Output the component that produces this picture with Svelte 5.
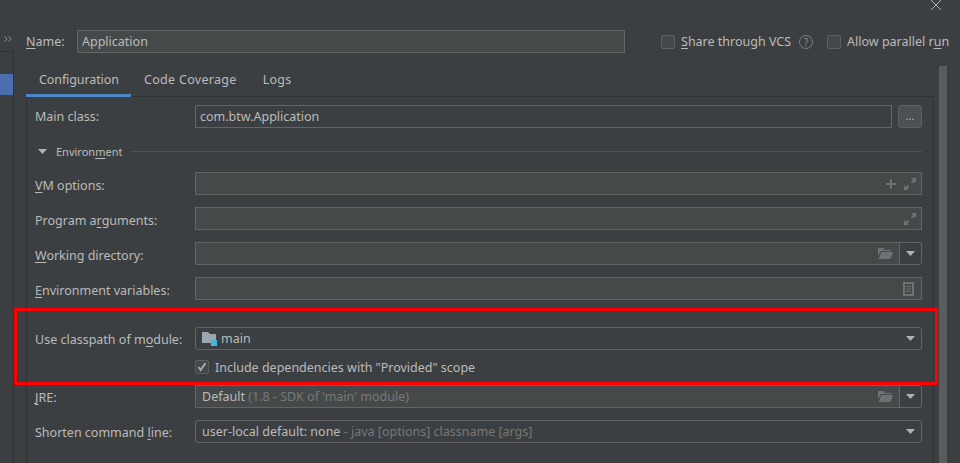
<script>
	// static mock of the run configuration dialog
</script>

{#snippet expand()}
	<svg class="ico" width="12" height="12" viewBox="0 0 12 12" fill="#6e7274">
		<path d="M7 0h5v5l-1.6-1.6-2.2 2.2-1.4-1.4 2.2-2.2z" />
		<path d="M0 7v5h5l-1.6-1.6 2-2-1.4-1.4-2 2z" />
	</svg>
{/snippet}

{#snippet folder()}
	<svg class="ico" width="15" height="11" viewBox="0 0 15 11" fill="#6e7274">
		<path d="M0 0h5l2 2h6v1H3L0 8z" />
		<path d="M3.5 4H15l-2.5 7H0.5z" />
	</svg>
{/snippet}

{#snippet arrow()}
	<svg class="arrow" width="9" height="5" viewBox="0 0 9 5"><path d="M0 0h9L4.5 5z" fill="#afb1b3" /></svg>
{/snippet}

<div class="dialog">
	<aside class="side">
		<div class="chev">
			<svg width="8" height="6" viewBox="0 0 8 6"><path d="M0.5 0.5L3 3 0.5 5.5M4.5 0.5L7 3 4.5 5.5" fill="none" stroke="#8c8f91" /></svg>
		</div>
		<div class="tree"><div class="sel"></div></div>
	</aside>

	<main class="body">
		<svg class="close" width="12" height="12" viewBox="0 0 12 12"><path d="M1 0l10 10M11 0L1 10" stroke="#afb1b3" fill="none" /></svg>

		<div class="head">
			<div class="name-lbl"><u>N</u>ame:</div>
			<div class="field name-field">Application</div>
			<span class="box"></span>
			<span class="chk-text"><u>S</u>hare through VCS</span>
			<span class="help">?</span>
			<span class="box"></span>
			<span class="chk-text">Allow parallel r<u>u</u>n</span>
		</div>

		<div class="columns">
			<div class="left">
				<div class="tabs">
					<div class="tab active">Configuration</div>
					<div class="tab">Code Coverage</div>
					<div class="tab">Logs</div>
				</div>

				<div class="panel">
					<div class="row first">
						<div class="lbl">Main class:</div>
						<div class="field plain fill">com.btw.Application</div>
						<div class="more">...</div>
					</div>

					<div class="section">
						<svg width="9" height="5" viewBox="0 0 9 5"><path d="M0 0h9L4.5 5z" fill="#afb1b3" /></svg>
						<span>Environ<u>m</u>ent</span>
						<div class="rule"></div>
					</div>

					<div class="row">
						<div class="lbl low"><u>V</u>M options:</div>
						<div class="field fill icons">
							<svg class="ico" width="10" height="10" viewBox="0 0 10 10"><path d="M4 0h2v4h4v2H6v4H4V6H0V4h4z" fill="#6e7274" /></svg>
							{@render expand()}
						</div>
					</div>
					<div class="row">
						<div class="lbl low">Program a<u>r</u>guments:</div>
						<div class="field fill icons">{@render expand()}</div>
					</div>
					<div class="row">
						<div class="lbl low"><u>W</u>orking directory:</div>
						<div class="field fill joined">
							{@render folder()}
							<div class="drop">{@render arrow()}</div>
						</div>
					</div>
					<div class="row">
						<div class="lbl low"><u>E</u>nvironment variables:</div>
						<div class="field fill icons doc">
							<svg class="ico" width="11" height="14" viewBox="0 0 11 14">
								<path fill-rule="evenodd" d="M0 0h11v14H0zM2 2v10h7V2z" fill="#6e7274" />
								<path d="M3 4h5v1H3zM3 6.5h5v1H3zM3 9h5v1H3z" fill="#6e7274" />
							</svg>
						</div>
					</div>

					<div class="row module">
						<div class="lbl nudge">Use classpath of m<u>o</u>dule:</div>
						<div class="field plain fill combo">
							<svg class="mod" width="15" height="14" viewBox="0 0 15 14">
								<path d="M0 0h6l2 2h6v9H0z" fill="#9aa7b0" />
								<path d="M9 8h6v6H9z" fill="#40b6e0" />
							</svg>
							<span>main</span>
							{@render arrow()}
						</div>
					</div>
					<div class="include">
						<span class="box">
							<svg width="10" height="10" viewBox="0 0 10 10"><path d="M1.5 5l2.2 3 4.8-7" fill="none" stroke="#a7a7a7" stroke-width="2" /></svg>
						</span>
						<span class="chk-text">Include dependencies with "Provided" scope</span>
					</div>

					<div class="row jre">
						<div class="lbl nudge"><u>J</u>RE:</div>
						<div class="field fill joined">
							<span>Default <span class="dim">(1.8 - SDK of 'main' module)</span></span>
							{@render folder()}
							<div class="drop">{@render arrow()}</div>
						</div>
					</div>
					<div class="row">
						<div class="lbl nudge">Shorten command <u>l</u>ine:</div>
						<div class="field plain fill combo">
							<span>user-local default: none <span class="dim">- java [options] classname [args]</span></span>
							{@render arrow()}
						</div>
					</div>
				</div>
			</div>
			<div class="scrollbar"></div>
		</div>

		<div class="highlight"></div>
	</main>
</div>

<style>
	:global(body) {
		margin: 0;
		background: #3c3f41;
	}
	.dialog {
		position: relative;
		display: flex;
		width: 960px;
		height: 463px;
		overflow: hidden;
		background: #3c3f41;
		color: #bbbbbb;
		font: 12.5px/17px "Noto Sans", "Open Sans", sans-serif;
	}
	u {
		text-underline-offset: 2px;
	}
	.side {
		flex: none;
		width: 14px;
		padding-top: 36px;
		box-sizing: border-box;
	}
	.chev {
		height: 15px;
		padding-left: 4px;
		box-sizing: border-box;
	}
	.chev svg {
		display: block;
	}
	.tree {
		height: 412px;
		border-top: 1px solid #323232;
		border-right: 1px solid #323232;
		padding-top: 22px;
		box-sizing: border-box;
	}
	.sel {
		height: 21px;
		background: #4b6eaf;
	}
	.body {
		flex: 1;
		min-width: 0;
		padding: 30px 0 0 12px;
	}
	.close {
		position: absolute;
		top: 0;
		left: 930px;
	}
	.head {
		display: flex;
		align-items: center;
		height: 23px;
	}
	.name-lbl {
		width: 51px;
		flex: none;
	}
	.name-field {
		flex: none;
		width: 548px;
		margin-right: 36px;
		padding-left: 5px;
	}
	.head .box + .chk-text {
		margin-left: 6px;
	}
	.chk-text {
		white-space: nowrap;
	}
	.help {
		flex: none;
		width: 12px;
		height: 12px;
		margin: 0 14px 0 8px;
		border: 1px solid #7f8284;
		border-radius: 50%;
		font-size: 10px;
		line-height: 12px;
		text-align: center;
		color: #8c8f91;
	}
	.box {
		flex: none;
		display: flex;
		align-items: center;
		justify-content: center;
		width: 12px;
		height: 12px;
		border: 1px solid #5e6060;
		border-radius: 2px;
		background: #43494a;
	}
	.columns {
		display: flex;
		height: 397px;
		margin-top: 13px;
	}
	.left {
		width: 908px;
		flex: none;
	}
	.tabs {
		display: flex;
		height: 30px;
		border-bottom: 1px solid #323232;
	}
	.tab {
		height: 31px;
		padding: 5px 13px 0;
		box-sizing: border-box;
		letter-spacing: 0.3px;
	}
	.active {
		width: 105px;
		padding: 5px 0 0 13px;
		letter-spacing: -0.1px;
		box-shadow: inset 0 -3px #4a88c7;
	}
	.panel {
		height: 366px;
		padding: 8px 11px 0 8px;
		box-sizing: border-box;
		border-left: 1px solid #323232;
		border-right: 1px solid #323232;
	}
	.row {
		display: flex;
		height: 23px;
		align-items: center;
		margin-top: 12px;
	}
	.row.first {
		margin-top: 0;
	}
	.lbl {
		flex: none;
		width: 160px;
	}
	.low {
		padding-top: 4px;
	}
	.nudge {
		padding-top: 2px;
	}
	.field {
		display: flex;
		align-items: center;
		height: 23px;
		padding: 0 4px;
		box-sizing: border-box;
		border: 1px solid #646464;
		background: #45494a;
		white-space: nowrap;
	}
	.fill {
		flex: 1;
		min-width: 0;
	}
	.plain {
		background: #3c3f41;
	}
	.icons {
		justify-content: flex-end;
		gap: 8px;
		padding-right: 5px;
	}
	.doc {
		padding-right: 7px;
	}
	.ico {
		flex: none;
	}
	.more {
		flex: none;
		width: 22px;
		height: 21px;
		margin-left: 6px;
		border: 1px solid #5e6060;
		border-radius: 3px;
		background: #4c5052;
		font-size: 11px;
		line-height: 19px;
		text-align: center;
	}
	.section {
		display: flex;
		align-items: center;
		gap: 9px;
		height: 17px;
		margin: 15px 0 0 3px;
		font-size: 11px;
	}
	.rule {
		flex: 1;
		height: 1px;
		background: #515151;
	}
	.joined {
		justify-content: flex-end;
		gap: 6px;
		padding: 0 0 0 6px;
		border-radius: 0 3px 3px 0;
	}
	.joined > span:first-child {
		margin-right: auto;
	}
	.drop {
		flex: none;
		display: flex;
		align-items: center;
		justify-content: center;
		width: 22px;
		height: 21px;
		box-sizing: border-box;
		border-left: 1px solid #646464;
		background: #3c3f41;
		border-radius: 0 3px 3px 0;
	}
	.combo {
		gap: 4px;
		padding: 0 6px;
		border-radius: 3px;
	}
	.combo .arrow {
		margin-left: auto;
	}
	.dim {
		color: #787878;
	}
	.module {
		margin-top: 27px;
	}
	.include {
		display: flex;
		align-items: center;
		gap: 6px;
		height: 14px;
		margin: 10px 0 0 160px;
	}
	.jre {
		margin-top: 11px;
	}
	.scrollbar {
		width: 8px;
		margin-left: 5px;
		background: #5a5d5e;
	}
	.highlight {
		position: absolute;
		left: 14px;
		top: 308px;
		width: 918px;
		height: 71px;
		border: 3px solid #ff0000;
		pointer-events: none;
	}
</style>
